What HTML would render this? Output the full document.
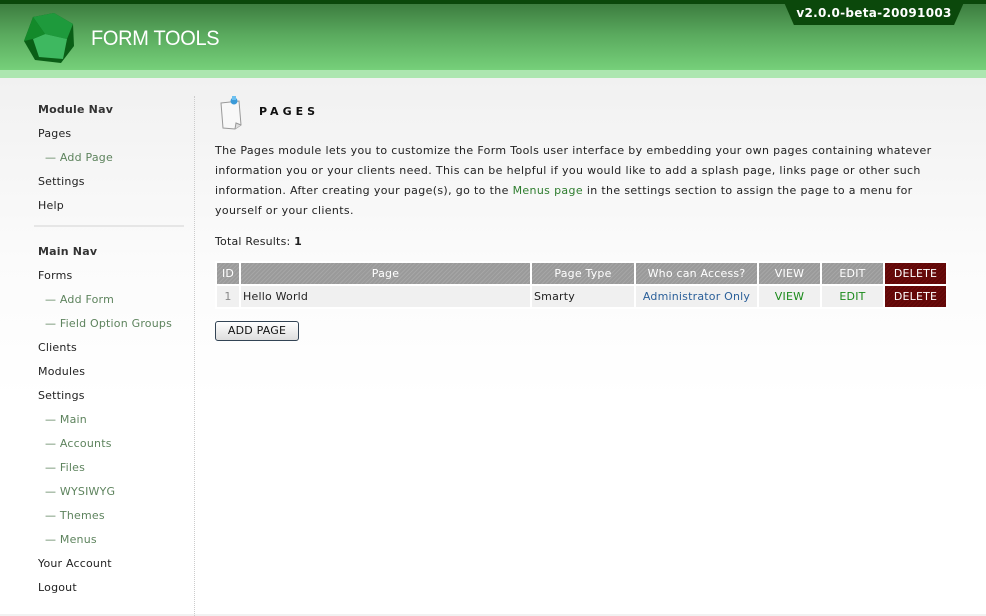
<!DOCTYPE html>
<html><head><meta charset="utf-8"><style>
*{margin:0;padding:0;box-sizing:border-box}
body{width:986px;height:614px;overflow:hidden;font-family:"DejaVu Sans","Liberation Sans",sans-serif;font-size:11px;letter-spacing:0.2px;color:#222;background:linear-gradient(#f1f1f1 78px,#fbfbfb 260px,#fff 400px);position:relative}
#hdr{position:absolute;left:0;top:0;width:986px;height:78px;background:linear-gradient(#3d7d3f 4px,#5aaa5e 35px,#76d07a 70px);}
#hdr .top{position:absolute;left:0;top:0;width:986px;height:4px;background:#0b480b}
#hdr .band{position:absolute;left:0;top:70px;width:986px;height:8px;background:#ade6b0}
#ver{position:absolute;left:783px;top:0;width:182px;height:25px;background:#0b480b;clip-path:polygon(0 0,100% 0,94% 100%,6% 100%);color:#fff;font-weight:bold;font-size:12px;text-align:center;line-height:26px;letter-spacing:.3px}
#logo{position:absolute;left:91px;top:27px;color:#fff;font-size:21px;font-family:"Liberation Sans",sans-serif;letter-spacing:-0.3px;transform:scaleX(0.95);transform-origin:left}
#side{position:absolute;left:38px;top:100px;width:150px}
#side div{height:24px;line-height:20px}
#side .h{font-weight:bold;color:#333}
#side .s{color:#5d835d;padding-left:7px}
#side hr{border:0;border-top:2px solid #e6e6e6;margin:5px -4px 15px -4px;width:150px}
#vline{position:absolute;left:194px;top:96px;height:520px;border-left:1px dotted #ccc}
#title{position:absolute;left:259px;top:105px;font-weight:bold;letter-spacing:4px;font-size:11px;color:#111}
#intro{position:absolute;left:215px;top:141px;width:735px;line-height:20px;color:#222;letter-spacing:0.35px}
#intro a{color:#2e7d2e;text-decoration:none}
#tot{position:absolute;left:215px;top:235px}
table{position:absolute;left:215px;top:261px;border-collapse:collapse;border:1px solid #ddd}
td,th{border:2px solid #fff;height:23px;font-weight:normal;text-align:center;padding:0}
th{background:repeating-linear-gradient(135deg,#a6a6a6 0 1px,#9a9a9a 1px 3px);color:#fff}
td{background:#f0f0f0}
.del{background:repeating-linear-gradient(135deg,#6e0c0c 0 1px,#600808 1px 3px)!important;color:#fff}
#btn{position:absolute;left:215px;top:321px;width:84px;height:20px;border:1px solid #345;border-radius:3px;background:linear-gradient(#fff,#ddd);text-align:center;line-height:18px;color:#111}
</style></head><body>
<div id="hdr"><div class="top"></div><div class="band"></div>
<svg style="position:absolute;left:21px;top:11px" width="56" height="56" viewBox="0 0 56 56">
<polygon points="12,6 33,2 52,13 53,35 40,52 14,49 3,30" fill="#0a5e16"/>
<polygon points="12,6 33,2 52,13 46,28 24,23" fill="#1e9a3c"/>
<polygon points="24,23 46,28 42,48 18,46 12,28" fill="#3eb860"/>
<polygon points="12,6 24,23 12,28 3,30" fill="#138a2a"/>
</svg>
<div id="logo">FORM TOOLS</div>
<div id="ver">v2.0.0-beta-20091003</div></div>
<div id="side">
<div class="h">Module Nav</div><div>Pages</div><div class="s">— Add Page</div><div>Settings</div><div>Help</div>
<hr>
<div class="h">Main Nav</div><div>Forms</div><div class="s">— Add Form</div><div class="s">— Field Option Groups</div><div>Clients</div><div>Modules</div><div>Settings</div><div class="s">— Main</div><div class="s">— Accounts</div><div class="s">— Files</div><div class="s">— WYSIWYG</div><div class="s">— Themes</div><div class="s">— Menus</div><div>Your Account</div><div>Logout</div>
</div>
<div id="vline"></div>
<svg style="position:absolute;left:217px;top:95px" width="30" height="36" viewBox="0 0 30 36">
<path d="M4 8 L22 6 L24 30 L18 34 L6 33 Z" fill="#f8f8f8" stroke="#999"/>
<path d="M18 34 L19 28 L24 30" fill="#ddd" stroke="#999"/>
<circle cx="17" cy="6" r="3.5" fill="#3a9ad8"/><rect x="15" y="1" width="4" height="4" fill="#6cc0f0"/>
</svg>
<div id="title">PAGES</div>
<div id="intro">The Pages module lets you to customize the Form Tools user interface by embedding your own pages containing whatever information you or your clients need. This can be helpful if you would like to add a splash page, links page or other such information. After creating your page(s), go to the <a>Menus page</a> in the settings section to assign the page to a menu for yourself or your clients.</div>
<div id="tot">Total Results: <b>1</b></div>
<table>
<tr><th style="width:24px">ID</th><th style="width:291px">Page</th><th style="width:104px">Page Type</th><th style="width:123px">Who can Access?</th><th style="width:63px">VIEW</th><th style="width:63px">EDIT</th><th class="del" style="width:63px">DELETE</th></tr>
<tr><td style="color:#888">1</td><td style="text-align:left;padding-left:2px">Hello World</td><td style="text-align:left;padding-left:2px">Smarty</td><td style="color:#2a5f99">Administrator Only</td><td style="color:#1a8a1a">VIEW</td><td style="color:#1a8a1a">EDIT</td><td class="del">DELETE</td></tr>
</table>
<div id="btn">ADD PAGE</div>
</body></html>
